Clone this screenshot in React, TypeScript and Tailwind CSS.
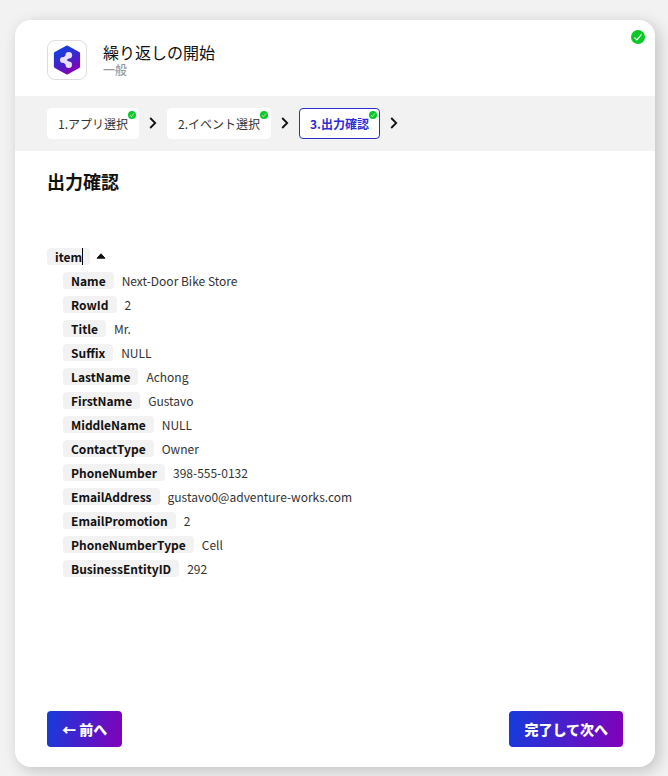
import React, { useState } from 'react';

interface Step {
  id: number;
  label: string;
}

interface OutputField {
  name: string;
  value: string;
}

const steps: Step[] = [
  { id: 1, label: '1.アプリ選択' },
  { id: 2, label: '2.イベント選択' },
  { id: 3, label: '3.出力確認' },
];

const fields: OutputField[] = [
  { name: 'Name', value: 'Next-Door Bike Store' },
  { name: 'RowId', value: '2' },
  { name: 'Title', value: 'Mr.' },
  { name: 'Suffix', value: 'NULL' },
  { name: 'LastName', value: 'Achong' },
  { name: 'FirstName', value: 'Gustavo' },
  { name: 'MiddleName', value: 'NULL' },
  { name: 'ContactType', value: 'Owner' },
  { name: 'PhoneNumber', value: '398-555-0132' },
  { name: 'EmailAddress', value: 'gustavo0@adventure-works.com' },
  { name: 'EmailPromotion', value: '2' },
  { name: 'PhoneNumberType', value: 'Cell' },
  { name: 'BusinessEntityID', value: '292' },
];

function CheckBadge({ className }: { className: string }) {
  return (
    <svg viewBox="0 0 16 16" className={className} aria-hidden="true">
      <circle cx="8" cy="8" r="8" fill="#08c925" />
      <path d="M4 8.6 6.7 11.2 12 4.9" fill="none" stroke="#fff" strokeWidth="1.3" />
    </svg>
  );
}

function AppLogo() {
  return (
    <svg viewBox="0 0 28 30" className="w-7 h-[30px]" aria-hidden="true">
      <defs>
        <linearGradient id="logo" x1="0.2" y1="0" x2="0.7" y2="1">
          <stop offset="0.15" stopColor="#1a3bdc" />
          <stop offset="0.6" stopColor="#4a1fc8" />
          <stop offset="1" stopColor="#8a00b4" />
        </linearGradient>
      </defs>
      <path
        d="M14 2.2 25.4 8.5V21.5L14 27.8 2.6 21.5V8.5Z"
        fill="url(#logo)"
        stroke="url(#logo)"
        strokeWidth="3.4"
        strokeLinejoin="round"
      />
      <path d="M15.8 10.6 10.5 15 15.8 19.4" fill="none" stroke="#e6e0fa" strokeWidth="4.2" />
      <circle cx="15.8" cy="10.2" r="3.3" fill="#e6e0fa" />
      <circle cx="10" cy="15" r="3" fill="#e6e0fa" />
      <circle cx="15.8" cy="19.8" r="3.2" fill="#e6e0fa" />
    </svg>
  );
}

function StepArrow() {
  return (
    <svg viewBox="0 0 8 12" className="w-2 h-3 mx-[10px] mb-px shrink-0" aria-hidden="true">
      <path d="M1.2 1 6.2 6 1.2 11" fill="none" stroke="#111" strokeWidth="1.8" />
    </svg>
  );
}

export default function App() {
  const [activeStep, setActiveStep] = useState(3);
  const [isOpen, setIsOpen] = useState(true);

  return (
    <div className="min-h-screen flex flex-col bg-[#f2f2f2] pt-5 pb-[9px] pl-[15px] pr-[13px] text-[#111] font-['Noto_Sans_CJK_JP',sans-serif]">
      <main className="relative flex-1 flex flex-col bg-white rounded-2xl shadow-[4px_4px_16px_rgba(0,0,0,0.2)]">
        <CheckBadge className="absolute top-[10px] right-[10px] w-[14px] h-[14px]" />

        {/* Header */}
        <header className="flex items-center gap-4 px-8 h-19">
          <div className="w-10 h-10 mt-1 flex items-center justify-center border border-[#dedede] rounded-lg">
            <AppLogo />
          </div>
          <div className="mt-1">
            <h1 className="text-base leading-5">繰り返しの開始</h1>
            <p className="text-xs leading-4 font-medium text-[#999]">一般</p>
          </div>
        </header>

        {/* Steps */}
        <nav className="flex items-center px-8 py-3 bg-[#f2f2f2]">
          {steps.map((step) => (
            <React.Fragment key={step.id}>
              <button
                onClick={() => setActiveStep(step.id)}
                className={`relative h-[31px] px-[10px] rounded border text-xs leading-4 whitespace-nowrap ${
                  activeStep === step.id
                    ? 'bg-white border-[#2d2dd2] text-[#2d2dd2] font-bold'
                    : 'bg-white border-white text-[#333]'
                }`}
              >
                {step.label}
                <CheckBadge className="absolute top-[2px] right-[2px] w-2 h-2" />
              </button>
              <StepArrow />
            </React.Fragment>
          ))}
        </nav>

        {/* Output */}
        <section className="flex-1 px-8 pt-[17px]">
          <h2 className="text-lg leading-[26px] font-bold">出力確認</h2>
          <div className="mt-[50px] text-xs">
            <div className="flex items-center h-6">
              <span className="relative h-[17px] px-2 rounded bg-[#f2f2f2] font-bold leading-[17px]">
                item
                <span className="absolute top-0 right-[7px] w-px h-[17px] bg-black" />
              </span>
              <button onClick={() => setIsOpen(!isOpen)} aria-label="item" className="ml-[6px]">
                <svg
                  viewBox="0 0 10 6"
                  className={`w-[10px] h-[6px] ${isOpen ? '' : 'rotate-180'}`}
                  aria-hidden="true"
                >
                  <path d="M5 0.8 9 5.2H1Z" fill="#111" stroke="#111" strokeLinejoin="round" />
                </svg>
              </button>
            </div>
            {isOpen && (
              <dl className="pl-4">
                {fields.map((field) => (
                  <div key={field.name} className="flex items-center gap-2 h-6">
                    <dt className="h-[17px] px-2 rounded bg-[#f2f2f2] font-bold leading-[17px]">
                      {field.name}
                    </dt>
                    <dd className="leading-[17px] text-[#333]">{field.value}</dd>
                  </div>
                ))}
              </dl>
            )}
          </div>
        </section>

        {/* Footer */}
        <footer className="flex justify-between px-8 pb-5">
          <button className="h-9 px-[15px] rounded bg-linear-[100deg] from-[#143cdc] to-[#8200b9] text-sm font-black text-white">
            ← 前へ
          </button>
          <button className="h-9 px-[15px] rounded bg-linear-[100deg] from-[#143cdc] to-[#8200b9] text-sm font-black text-white">
            完了して次へ
          </button>
        </footer>
      </main>
    </div>
  );
}
